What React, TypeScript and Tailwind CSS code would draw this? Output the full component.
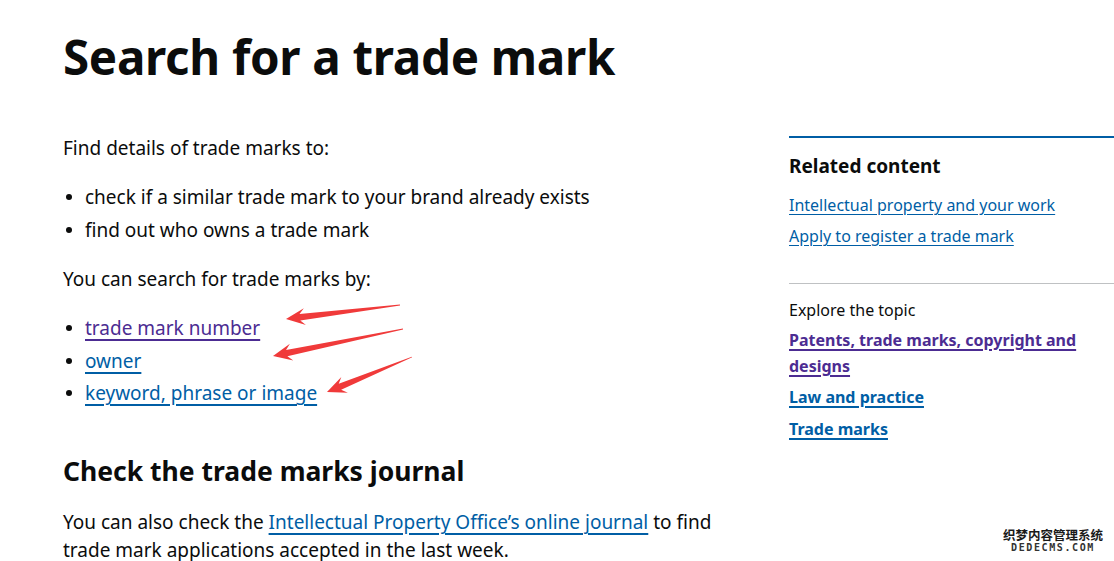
import React from "react";

const FONT = { fontFamily: '"Noto Sans", "Liberation Sans", Arial, sans-serif' };

type Pt = [number, number];

// tapered red annotation arrow, tail -> tip
function arrowPoints(tail: Pt, tip: Pt) {
    const dx = tip[0] - tail[0];
    const dy = tip[1] - tail[1];
    const len = Math.hypot(dx, dy);
    const ux = dx / len;
    const uy = dy / len;
    const nx = -uy;
    const ny = ux;
    const headLen = 19;
    const headW = 8.5;
    const shaftW = 3.2;
    const bx = tip[0] - ux * headLen;
    const by = tip[1] - uy * headLen;
    const back = 5;
    const pts: Pt[] = [
        [tail[0] + nx * 0.4, tail[1] + ny * 0.4],
        [bx + ux * back + nx * shaftW, by + uy * back + ny * shaftW],
        [bx + nx * headW, by + ny * headW],
        tip,
        [bx - nx * headW, by - ny * headW],
        [bx + ux * back - nx * shaftW, by + uy * back - ny * shaftW],
        [tail[0] - nx * 0.4, tail[1] - ny * 0.4],
    ];
    return pts.map((p) => p.join(",")).join(" ");
}

const ARROWS: [Pt, Pt][] = [
    [[400, 305], [286, 319]],
    [[403, 329], [273, 356]],
    [[412, 357], [327, 392]],
];

function Bullet() {
    return (
        <span className="w-[22px] shrink-0 flex items-center">
            <span className="ml-[3px] w-[6px] h-[6px] rounded-full bg-[#0b0c0c]" />
        </span>
    );
}

const link = "underline underline-offset-[4px] decoration-[1.5px]";

export default function App() {
    return (
        <div className="relative w-[1114px] h-[561px] overflow-hidden bg-white text-[#0b0c0c]" style={FONT}>
            <div className="flex pl-[63px]">
                {/* Main column */}
                <main className="w-[693px] shrink-0">
                    <h1 className="mt-[28px] text-[47.5px] leading-[58px] font-bold tracking-[-0.3px]">
                        Search for a trade mark
                    </h1>

                    <p className="mt-[48px] text-[19px] leading-[28px]">Find details of trade marks to:</p>

                    <ul className="mt-[21px] text-[19px] leading-[28px]">
                        <li className="mb-[5px] flex">
                            <Bullet />
                            check if a similar trade mark to your brand already exists
                        </li>
                        <li className="flex">
                            <Bullet />
                            find out who owns a trade mark
                        </li>
                    </ul>

                    <p className="mt-[21px] text-[19px] leading-[28px]">You can search for trade marks by:</p>

                    <ul className="mt-[21px] text-[19px] leading-[28px]">
                        <li className="mb-[4.5px] flex">
                            <Bullet />
                            <a href="#" className={`text-[#4c2c92] ${link}`}>
                                trade mark number
                            </a>
                        </li>
                        <li className="mb-[4.5px] flex">
                            <Bullet />
                            <a href="#" className={`text-[#005ea5] ${link}`}>
                                owner
                            </a>
                        </li>
                        <li className="flex">
                            <Bullet />
                            <a href="#" className={`text-[#005ea5] ${link}`}>
                                keyword, phrase or image
                            </a>
                        </li>
                    </ul>

                    <h2 className="mt-[46px] text-[26.5px] leading-[36px] font-bold">Check the trade marks journal</h2>

                    <p className="mt-[20px] text-[19px] leading-[27.5px]">
                        You can also check the{" "}
                        <a href="#" className={`text-[#005ea5] ${link}`}>
                            Intellectual Property Office’s online journal
                        </a>{" "}
                        to find trade mark applications accepted in the last week.
                    </p>
                </main>

                {/* Sidebar */}
                <aside className="ml-[33px] flex-1 mt-[136px]">
                    <div className="border-t-2 border-[#005ea5] pt-[14px] pb-[36px]">
                        <h2 className="text-[19px] leading-[28px] font-bold">Related content</h2>
                        <ul className="mt-[14px] text-[16px] leading-[22px]">
                            <li className="mb-[9px]">
                                <a href="#" className="text-[#005ea5] underline underline-offset-[3px]">
                                    Intellectual property and your work
                                </a>
                            </li>
                            <li>
                                <a href="#" className="text-[#005ea5] underline underline-offset-[3px]">
                                    Apply to register a trade mark
                                </a>
                            </li>
                        </ul>
                    </div>
                    <div className="border-t border-[#bfc1c3] pt-[15px]">
                        <p className="text-[16px] leading-[22px]">Explore the topic</p>
                        <ul className="mt-[6px] text-[16px] leading-[26px] font-bold">
                            <li className="mb-[5px] w-[300px]">
                                <a href="#" className="text-[#4c2c92] underline underline-offset-[3px] decoration-[1.5px]">
                                    Patents, trade marks, copyright and designs
                                </a>
                            </li>
                            <li className="mb-[6px]">
                                <a href="#" className="text-[#005ea5] underline underline-offset-[3px] decoration-[1.5px]">
                                    Law and practice
                                </a>
                            </li>
                            <li>
                                <a href="#" className="text-[#005ea5] underline underline-offset-[3px] decoration-[1.5px]">
                                    Trade marks
                                </a>
                            </li>
                        </ul>
                    </div>
                </aside>
            </div>

            {/* red annotation arrows */}
            <svg className="absolute inset-0 pointer-events-none" width="1114" height="561">
                {ARROWS.map(([tail, tip], i) => (
                    <polygon key={i} points={arrowPoints(tail, tip)} fill="#f03a3a" />
                ))}
            </svg>

            {/* watermark */}
            <div className="absolute right-[11px] bottom-[8px] flex flex-col items-center">
                <span
                    className="text-[12.5px] leading-[14px] font-bold text-[#1a1a1a]"
                    style={{ fontFamily: '"Noto Sans CJK SC", sans-serif' }}
                >
                    织梦内容管理系统
                </span>
                <span
                    className="text-[10px] leading-[11px] font-bold text-[#333] tracking-[1.6px]"
                    style={{ fontFamily: '"DejaVu Sans Mono", monospace' }}
                >
                    DEDECMS.COM
                </span>
            </div>
        </div>
    );
}
